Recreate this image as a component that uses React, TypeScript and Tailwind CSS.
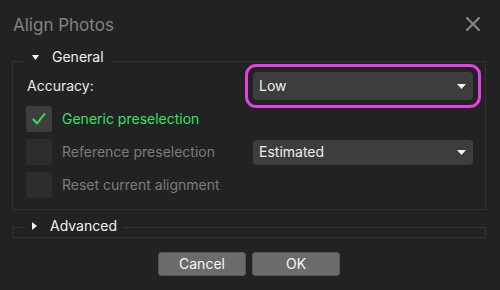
import React from "react";

const font = { fontFamily: "Inter, 'Noto Sans', 'Liberation Sans', sans-serif" };

function Combo({ value, h, ring }: { value: string; h: string; ring?: boolean }) {
  return (
    <div className={`relative w-[220px] ${h} rounded-[4px] bg-[#3d3d3d] flex items-center justify-between pl-[6px] pr-[7px]`}>
      <span className="text-[14px] text-[#eeeeee] leading-none">{value}</span>
      <svg width="9" height="5" viewBox="0 0 9 5"><path d="M0 0h9L4.5 5z" fill="#f2f2f2" /></svg>
      {ring && (
        <div className="absolute -inset-[8px] border-[3px] border-[#e540e6] rounded-[11px] pointer-events-none" />
      )}
    </div>
  );
}

function Check({ checked }: { checked?: boolean }) {
  return (
    <div className={`w-[26px] h-[26px] rounded-[3px] flex items-center justify-center ${checked ? "bg-[#3e3e3e]" : "bg-[#2c2c2c]"}`}>
      {checked && (
        <svg width="14" height="12" viewBox="0 0 14 12">
          <path d="M1.5 6.5 L5 10.5 L12.5 1" fill="none" stroke="#2fe262" strokeWidth="2" strokeLinecap="round" strokeLinejoin="round" />
        </svg>
      )}
    </div>
  );
}

export default function App() {
  return (
    <div className="w-[500px] h-[290px] bg-[#222222] overflow-hidden flex flex-col" style={font}>
      <div className="h-[50px] flex items-center justify-between pl-[13px] pr-[20px] shrink-0">
        <span className="text-[17px] text-[#828282] leading-none">Align Photos</span>
        <svg width="14" height="14" viewBox="0 0 14 14" className="-mt-[2px]">
          <path d="M1 1L13 13M13 1L1 13" stroke="#8a8a8a" strokeWidth="2" strokeLinecap="round" />
        </svg>
      </div>

      <div className="relative mt-[11px] ml-[12px] mr-[14px] border border-[#323232] pt-[10px] pb-[11px] pl-[13px] pr-[12px] flex flex-col">
        <div className="absolute left-[13px] -top-[15px] h-[20px] px-[6px] bg-[#222222] flex items-center gap-[13px]">
          <svg width="7" height="5" viewBox="0 0 7 5"><path d="M0 0h7L3.5 5z" fill="#f2f2f2" /></svg>
          <span className="text-[14px] text-[#f0f0f0] leading-none">General</span>
        </div>

        <div className="flex items-center h-[28px]">
          <span className="w-[227px] text-[14px] text-[#e8e8e8] leading-none pl-[1px]">Accuracy:</span>
          <Combo value="Low" h="h-[28px]" ring />
        </div>

        <div className="flex flex-col gap-[7px] mt-[6px]">
          <div className="flex items-center h-[26px]">
            <div className="w-[227px] flex items-center gap-[10px]">
              <Check checked />
              <span className="text-[14px] text-[#2fe262] leading-none">Generic preselection</span>
            </div>
          </div>
          <div className="flex items-center h-[26px]">
            <div className="w-[227px] flex items-center gap-[10px]">
              <Check />
              <span className="text-[14px] text-[#7c7c7c] leading-none">Reference preselection</span>
            </div>
            <Combo value="Estimated" h="h-[25px]" />
          </div>
          <div className="flex items-center h-[26px]">
            <div className="w-[227px] flex items-center gap-[10px]">
              <Check />
              <span className="text-[14px] text-[#7c7c7c] leading-none">Reset current alignment</span>
            </div>
          </div>
        </div>
      </div>

      <div className="relative mt-[17px] ml-[12px] mr-[14px] h-[11px] border border-[#323232]">
        <div className="absolute left-[13px] -top-[12px] h-[20px] px-[6px] bg-[#222222] flex items-center gap-[13px]">
          <svg width="5" height="8" viewBox="0 0 5 8"><path d="M0 0L5 4L0 8z" fill="#f2f2f2" /></svg>
          <span className="text-[14px] text-[#f0f0f0] leading-none">Advanced</span>
        </div>
      </div>

      <div className="flex justify-center gap-[6px] mt-[14px] pr-[2px]">
        <button className="w-[88px] h-[24px] rounded-[3px] bg-[#6b6b6b] border border-[#555555] text-[14px] text-[#f6f6f6] leading-none">Cancel</button>
        <button className="w-[88px] h-[24px] rounded-[3px] bg-[#6b6b6b] border border-[#555555] text-[14px] text-[#f6f6f6] leading-none">OK</button>
      </div>
    </div>
  );
}
